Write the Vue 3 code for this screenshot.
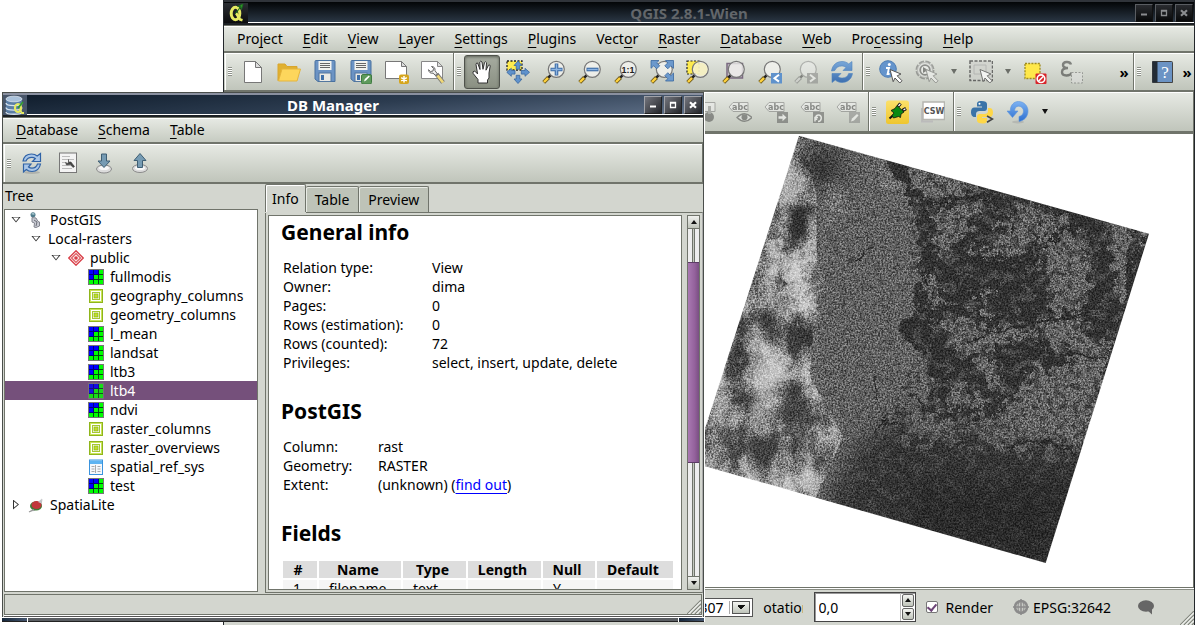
<script setup>
import { ref } from 'vue'

const mainMenu = [
  ['Pro', 'j', 'ect'], ['', 'E', 'dit'], ['', 'V', 'iew'], ['', 'L', 'ayer'], ['', 'S', 'ettings'], ['', 'P', 'lugins'],
  ['Vect', 'o', 'r'], ['', 'R', 'aster'], ['', 'D', 'atabase'], ['', 'W', 'eb'], ['Pro', 'c', 'essing'], ['', 'H', 'elp'],
]
const dbMenu = [['', 'D', 'atabase'], ['', 'S', 'chema'], ['', 'T', 'able']]

const t = (id, label, kind = '') => ({ id, label, kind })
const fileTools = [
  t('new', 'New project'), t('open', 'Open project'), t('save', 'Save project'), t('saveas', 'Save as'),
  t('composer', 'New print composer'), t('manager', 'Composer manager'),
]
const navTools = [
  t('hand', 'Pan map', 'on'), t('panto', 'Pan to selection'), t('zoomin', 'Zoom in'), t('zoomout', 'Zoom out'),
  t('zoom1', 'Zoom to native resolution'), t('zoomfull', 'Zoom full'), t('zoomsel', 'Zoom to selection'),
  t('zoomlayer', 'Zoom to layer'), t('zoomlast', 'Zoom last'), t('zoomnext', 'Zoom next', 'off'), t('refresh', 'Refresh'),
]
const attrTools = [
  t('identify', 'Identify features'), t('action', 'Run feature action', 'off'), t('', 'Action list', 'dim arrow'),
  t('select', 'Select features', 'faint'), t('', 'Selection modes', 'dim arrow'), t('deselect', 'Deselect features'),
  t('expression', 'Select by expression', 'off'),
]
const labelTools = [
  t('pin', 'Pin labels', 'off'), t('labeleye', 'Show labels', 'off'), t('labelmove', 'Move label', 'off'),
  t('labelrotate', 'Rotate label', 'off'), t('labeledit', 'Change label', 'off'),
]
const pluginTools = [t('plug', 'Plugin'), t('csw', 'Catalogue search')]
const pyTools = [t('python', 'Python console'), t('undo', 'Undo'), t('', 'More', 'arrow')]
const dbTools = [t('dbrefresh', 'Refresh'), t('sqlwin', 'SQL window'), t('import', 'Import layer'), t('export', 'Export to file')]

// Short lettering drawn on top of an icon
const abc = { text: 'abc', x: 12, y: 10, kind: 'abc' }
const glyphs = {
  zoom1: { text: '1:1', x: 14, y: 13, kind: 'ratio' },
  csw: { text: 'CSW', x: 13, y: 14, kind: 'csw' },
  labeleye: abc, labelmove: abc, labelrotate: abc, labeledit: abc,
}

const tree = [
  { d: 0, open: true, icon: 'postgis', name: 'PostGIS' },
  { d: 1, open: true, icon: '', name: 'Local-rasters' },
  { d: 2, open: true, icon: 'schema', name: 'public' },
  { d: 3, icon: 'raster', name: 'fullmodis' },
  { d: 3, icon: 'poly', name: 'geography_columns' },
  { d: 3, icon: 'poly', name: 'geometry_columns' },
  { d: 3, icon: 'raster', name: 'l_mean' },
  { d: 3, icon: 'raster', name: 'landsat' },
  { d: 3, icon: 'raster', name: 'ltb3' },
  { d: 3, icon: 'raster', name: 'ltb4' },
  { d: 3, icon: 'raster', name: 'ndvi' },
  { d: 3, icon: 'poly', name: 'raster_columns' },
  { d: 3, icon: 'poly', name: 'raster_overviews' },
  { d: 3, icon: 'table', name: 'spatial_ref_sys' },
  { d: 3, icon: 'raster', name: 'test' },
  { d: 0, open: false, icon: 'spatialite', name: 'SpatiaLite' },
]
const selected = ref('ltb4')
const tabs = ['Info', 'Table', 'Preview']
const tab = ref('Info')
const general = [
  ['Relation type:', 'View'], ['Owner:', 'dima'], ['Pages:', '0'], ['Rows (estimation):', '0'],
  ['Rows (counted):', '72'], ['Privileges:', 'select, insert, update, delete'],
]
const rotation = ref('0,0')
const render = ref(true)
</script>

<template>
  <div class="desktop">
    <svg class="sprite" aria-hidden="true">
      <defs>
        <linearGradient id="gBlue" x1="0" y1="0" x2="0" y2="1"><stop offset="0" stop-color="#79a7d8" /><stop offset="1" stop-color="#3d6fb0" /></linearGradient>
        <linearGradient id="gUndo" x1="0" y1="0" x2="0" y2="1"><stop offset="0" stop-color="#7db2f2" /><stop offset="1" stop-color="#2c6fd0" /></linearGradient>
        <linearGradient id="gYel" x1="0" y1="0" x2="0" y2="1"><stop offset="0" stop-color="#fbe06a" /><stop offset="1" stop-color="#efc62f" /></linearGradient>
      </defs>
      <symbol id="i-new" viewBox="0 0 24 24"><path d="M3.500 1.500h11l6 6v15h-17z" fill="#fff" stroke="#777" /><path d="M14.500 1.500v6h6z" fill="#ddd" stroke="#777" /></symbol>
      <symbol id="i-open" viewBox="0 0 24 24"><path d="M1 20.500V4h7l2 2.500h10V10H5z" fill="#e0b030" stroke="#d9a52c" /><path d="M5 9h18.500l-3.500 12H1.500z" fill="#fdd65c" stroke="#e5b53c" /></symbol>
      <symbol id="i-save" viewBox="0 0 24 24"><path d="M3 .5h18q1 0 1 1v20H5l-3-2.500V1.500q0-1 1-1z" fill="#6b93c4" stroke="#49719f" /><rect x="5.500" y="1" width="13" height="9" fill="#f2f2ee" /><path d="M7 3.500h10M7 5.500h10M7 7.500h10" stroke="#666" /><rect x="6" y="13" width="12" height="8.500" fill="#e9e9e4" stroke="#53779f" /><rect x="8" y="15" width="3" height="5" fill="#3f6fa8" /></symbol>
      <symbol id="i-saveas" viewBox="0 0 24 24"><use href="#i-save" /><rect x="12.500" y="14.500" width="10" height="9.500" rx="1.500" fill="#5e9a5c" stroke="#3e7a40" /><path d="M15 21.500l.8-2.500 4-3.500 1 1-3.800 4z" fill="#fff" /></symbol>
      <symbol id="i-composer" viewBox="0 0 24 24"><path d="M.5 1.500h16l5 5v12h-21z" fill="#fff" stroke="#777" /><path d="M16.500 1.500v5h5z" fill="#ddd" stroke="#777" /><rect x="14" y="14.500" width="10" height="9.500" rx="2" fill="#d5a51c" /><path d="M19 16v6.500M16.200 17.600l5.600 3.300M21.800 17.600l-5.600 3.300" stroke="#fff" stroke-width="1.500" /></symbol>
      <symbol id="i-manager" viewBox="0 0 24 24"><path d="M.5 1.500h16l5 5v12h-21z" fill="#fff" stroke="#888" /><path d="M16.500 1.500v5h5z" fill="#ddd" stroke="#888" /><path d="M10.500 6.500l2 2-.5 2.500-2.500.5-2-1.800q.5 4 4.500 3.500l3.500 3 1.500-1.500-3-4q.5-4-3.500-4.200z" fill="#eee" stroke="#666" /><path d="M15.500 14l6.500 8.500" stroke="#777" stroke-width="4.500" /><path d="M16.500 15.500l5.500 7" stroke="#f0d878" stroke-width="2.800" /></symbol>
      <symbol id="i-hand" viewBox="0 0 24 24"><path d="M8 23v-3.500L3.200 13.500q-1-2 1-2.400 1.200 0 3.400 2.900L6 4.500q.2-2 1.600-1.500L10 9.500 9.800 2q.8-1.800 2.200 0l1 7.300L14.500 2.500q1-1.500 2 .2L16 10.200l2.500-5q1.500-1 1.700.8L19 13v5l-1.500 2v3z" fill="#fff" stroke="#333" stroke-linejoin="round" /></symbol>
      <symbol id="i-panto" viewBox="0 0 24 24"><path d="M1 1h15v9H1z" fill="#fdea4e" stroke="#222" stroke-width="1.300" stroke-dasharray="2 1.500" /><path d="M12 1l4 4.500h-2.200v3.700h-3.600V5.500H8zM12 23.500l4-4.500h-2.200v-3.700h-3.600V19H8zM.8 12.300l4.500-4v2.200H9v3.600H5.300v2.200zM23.500 12.300l-4.500-4v2.200h-3.700v3.600H19v2.200z" fill="#5f92cc" stroke="#39679f" stroke-width=".8" /></symbol>
      <symbol id="i-mag" viewBox="0 0 24 24"><path d="M9 14.800l-3 3" stroke="#222" stroke-width="2.500" /><path d="M6.500 17.500L1.700 22.300" stroke="#6e5a1c" stroke-width="4" /><path d="M6 18L2 22" stroke="#ffd23c" stroke-width="2.400" /><circle cx="14.300" cy="9.300" r="8" fill="#f4f4f0" fill-opacity=".75" stroke="#777" stroke-width="1.200" /></symbol>
      <symbol id="i-zoomin" viewBox="0 0 24 24"><use href="#i-mag" /><path d="M14.500 3.500v12M8.500 9.500h12" stroke="#3c6ba5" stroke-width="3.600" /><path d="M14.500 4.300v10.400M9.300 9.500h10.400" stroke="#8cb4e2" stroke-width="1.400" /></symbol>
      <symbol id="i-zoomout" viewBox="0 0 24 24"><use href="#i-mag" /><path d="M8.500 9.500h12" stroke="#3c6ba5" stroke-width="3.600" /><path d="M9.300 9.500h10.400" stroke="#8cb4e2" stroke-width="1.400" /></symbol>
      <symbol id="i-zoom1" viewBox="0 0 24 24"><use href="#i-mag" /></symbol>
      <symbol id="i-zoomfull" viewBox="0 0 24 24"><use href="#i-mag" /><path d="M1 .5h8L6.700 2.800l3 3-3 3-3-3L1 8.300zM23.500.5h-8l2.300 2.300-3 3 3 3 3-3 2.700 2.500zM23.500 21h-8l2.300-2.300-3-3 3-3 3 3 2.700-2.700z" fill="#6c99cc" stroke="#39679f" stroke-width=".8" /></symbol>
      <symbol id="i-zoomsel" viewBox="0 0 24 24"><rect x="1" y="1" width="12" height="13" fill="#fdea4e" stroke="#222" stroke-width="1.200" stroke-dasharray="2 1.500" /><use href="#i-mag" /><circle cx="15" cy="9.300" r="6.500" fill="#f7efb4" fill-opacity=".7" /></symbol>
      <symbol id="i-zoomlayer" viewBox="0 0 24 24"><rect x="5" y="3.500" width="15.500" height="14.500" fill="#c9c1c9" stroke="#7a6a80" stroke-width="1.500" /><use href="#i-mag" /></symbol>
      <symbol id="i-zoomlast" viewBox="0 0 24 24"><use href="#i-mag" /><rect x="13" y="13" width="11" height="10.500" fill="#5f92cc" /><path d="M21 14.800l-4.500 3.400 4.500 3.400" fill="none" stroke="#fff" stroke-width="2" /></symbol>
      <symbol id="i-zoomnext" viewBox="0 0 24 24"><use href="#i-mag" /><rect x="13" y="13" width="11" height="10.500" fill="#777" /><path d="M16 14.800l4.500 3.400-4.500 3.400" fill="none" stroke="#fff" stroke-width="2" /></symbol>
      <symbol id="i-refresh" viewBox="0 0 24 24"><path d="M1.500 11C2.500 4.500 7 1.500 12 1.500c3 0 5 .9 6.700 2.400L22 1.500v9h-9l3-3c-1.200-1-2.500-1.500-4.200-1.500C8.500 6 6 7.500 4.800 10.500zM22.500 13.500c-1 6-5.500 9-10.500 9-3 0-5-1-6.700-2.400L2 22.500v-9h9l-3 3c1.200 1 2.500 1.500 4.200 1.500 3.300 0 5.500-1.500 6.500-4.500z" fill="url(#gBlue)" stroke="#4f83bd" stroke-width=".6" /></symbol>
      <symbol id="i-cursor" viewBox="0 0 24 24"><path d="M11 9.500l11 4.500-3.800 1.800 4.800 5-2.200 2.200-4.800-5-1.800 3.700z" fill="#fff" stroke="#555" /></symbol>
      <symbol id="i-identify" viewBox="0 0 24 24"><circle cx="9" cy="9" r="8.300" fill="#6494cc" stroke="#4c7cb4" /><circle cx="10.300" cy="4.500" r="1.500" fill="#fff" /><path d="M7 8h3l-1.400 6h2" fill="none" stroke="#fff" stroke-width="1.900" /><use href="#i-cursor" /></symbol>
      <symbol id="i-action" viewBox="0 0 24 24"><circle cx="10" cy="10" r="8" fill="#ddd" stroke="#555" stroke-width="3" stroke-dasharray="5 1.300" /><circle cx="10" cy="10" r="7.500" fill="#e8e8e4" stroke="#999" /><circle cx="10" cy="10" r="4.800" fill="#fff" stroke="#333" stroke-width="1.800" /><path d="M8 7l5 3-5 3z" fill="#222" /><use href="#i-cursor" /></symbol>
      <symbol id="i-select" viewBox="0 0 24 24"><path d="M1 1h22.500v19.500H1z" fill="#cfd1cc" stroke="#444" stroke-width="1.500" stroke-dasharray="3 1.500" /><path d="M5 5h12v9H5z" fill="none" stroke="#aaa" /><use href="#i-cursor" /></symbol>
      <symbol id="i-deselect" viewBox="0 0 24 24"><rect x="2" y="3.500" width="15" height="15" fill="#ffe84a" stroke="#a08c1e" stroke-width="1.300" stroke-dasharray="2 1.200" /><rect x="12.500" y="13.500" width="11" height="10.500" rx="1" fill="#d8232a" /><circle cx="18" cy="18.700" r="3.800" fill="none" stroke="#fff" stroke-width="1.600" /><path d="M15.500 21.200l5-5" stroke="#fff" stroke-width="1.600" /></symbol>
      <symbol id="i-expression" viewBox="0 0 24 24"><path d="M12 4.500C11 1 4 1.200 4 5c0 2.500 2.500 3 5 3-3.500 0-6 1-6 4 0 4.500 8 4.500 10 .5" fill="none" stroke="#111" stroke-width="2.400" /><rect x="12.500" y="12.500" width="11" height="10.500" fill="#e5e5e0" stroke="#555" stroke-dasharray="2 1.500" /></symbol>
      <symbol id="i-book" viewBox="0 0 24 24"><path d="M2.500 1.500h19q1 0 1 1v20h-20z" fill="#6b93c4" stroke="#444" /><path d="M2.500 1.500h5v21h-5z" fill="#232c36" /></symbol>
      <symbol id="i-tag" viewBox="0 0 24 24"><path d="M1 7l4-4.500h15v9H5z" fill="#f2f2ee" stroke="#666" /></symbol>
      <symbol id="i-pin" viewBox="0 0 24 24"><path d="M1 2.500h22v9H1z" fill="#f2f2ee" stroke="#666" /><circle cx="17" cy="17" r="5" fill="#333" /><path d="M16 6h3v8h-3z" fill="#777" /></symbol>
      <symbol id="i-labeleye" viewBox="0 0 24 24"><use href="#i-tag" /><path d="M9 17.500q7.500-7.500 15 0-7.500 7.500-15 0z" fill="#eee" stroke="#333" stroke-width="1.300" /><circle cx="16.500" cy="17.300" r="3" fill="#333" /></symbol>
      <symbol id="i-labelmove" viewBox="0 0 24 24"><use href="#i-tag" /><rect x="13" y="12" width="11" height="11" fill="#444" /><path d="M14.500 16.300h4v-2.500l4 3.700-4 3.700v-2.500h-4z" fill="#fff" /></symbol>
      <symbol id="i-labelrotate" viewBox="0 0 24 24"><use href="#i-tag" /><rect x="13" y="12" width="11" height="11" fill="#444" /><path d="M18 21.500c4 0 4.500-6.500.5-6.500-3.500 0-3.500 4.500-1.300 4.500M15 21.500v-4h3" fill="none" stroke="#fff" stroke-width="1.500" /></symbol>
      <symbol id="i-labeledit" viewBox="0 0 24 24"><use href="#i-tag" /><rect x="13" y="12" width="11" height="11" fill="#777" /><path d="M15 21.500l1-3 5-4.500 1.500 1.500-4.500 5z" fill="#fff" /></symbol>
      <symbol id="i-plug" viewBox="0 0 24 24"><rect x="1" y=".5" width="23" height="23.500" rx="2.500" fill="url(#gYel)" /><path d="M4.500 18.500L8.500 15" stroke="#111" stroke-width="2" /><path d="M13 6.500l2.500-3M17.500 10.500l3.500-2" stroke="#111" stroke-width="3.200" /><path d="M13.500 6l1.800-2.200M18.500 9.900l2-1.100" stroke="#fff" stroke-width="1.300" /><path d="M6 10.500l4-2 2-3 7 6.500-3 2-.5 3.500-2-1-5 1.500-1.500-2.500 2-2.500z" fill="#0a8a12" stroke="#111" stroke-width=".8" /></symbol>
      <symbol id="i-csw" viewBox="0 0 24 24"><path d="M1 8v13.500h11" fill="none" stroke="#bbb" stroke-width="2" /><rect x="2" y="2" width="21.500" height="17.500" fill="#fff" stroke="#b5b5b0" stroke-width="1.500" /></symbol>
      <symbol id="i-python" viewBox="0 0 24 24"><path d="M11.500 1c-4 0-4.500 1.500-4.500 3v2.500h5v1H4.500C2 7.500 1 9.500 1 12s1 5 3.500 5H6v-3c0-2 1.500-3 3.500-3h5c1.500 0 2.500-1.200 2.500-2.700V4c0-2-2-3-5.500-3z" fill="#3a73a8" /><circle cx="9.500" cy="3.800" r="1" fill="#fff" /><path d="M12.500 23.500c4 0 4.500-1.500 4.500-3V18h-5v-1h7.500c2.500 0 3.500-2 3.500-4.500s-1-4.500-3.500-4.500H18v3c0 2-1.500 3-3.500 3h-5C8 14 7 15.200 7 16.700v3.800c0 2 2 3 5.500 3z" fill="#fed748" /><path d="M17 16l5.500 3-5.500 3.200" fill="none" stroke="#444" stroke-width="1.600" /></symbol>
      <symbol id="i-undo" viewBox="0 0 24 24"><ellipse cx="12" cy="22" rx="6" ry="1.500" fill="#999" opacity=".4" /><path d="M1 11h3.300C4.300 5 8 1.500 12.500 1.500 18 1.500 22 6 22 11c0 5.500-3.500 9.500-9 10.500v-5c3-.7 4.500-2.700 4.500-5.500 0-2.500-2-4.800-5-4.800-2.300 0-4 1.800-4 4.800H12l-5.500 6.500z" fill="url(#gUndo)" stroke="#5b93dc" stroke-width=".6" /></symbol>
      <symbol id="i-dbrefresh" viewBox="0 0 24 24"><ellipse cx="12" cy="21.500" rx="8" ry="1.500" fill="#888" opacity=".4" /><path d="M3 10C4 5 7.500 3 11.500 3c2.500 0 4.300.7 5.700 2L20.500 2.500v8h-8l2.800-3c-1-.8-2-1.200-3.500-1.200C9 6.300 7 7.500 6 10zM20.500 13c-1 5-4.500 7.500-8.500 7.500-2.500 0-4.300-.7-5.700-2L3.500 21v-8h7.500l-2.500 3c1 .8 2 1.200 3.500 1.200 2.500 0 4.500-1.200 5.500-4.200z" fill="#a9c6e8" stroke="#2f62a6" stroke-width="1.200" /></symbol>
      <symbol id="i-sqlwin" viewBox="0 0 24 24"><rect x="3.500" y="2" width="17" height="19.500" fill="#f3f3f3" stroke="#777" /><path d="M6 5.500h8M6 8.500h12M6 11.500h5M6 14.500h12M6 17.500h10" stroke="#bbb" /><path d="M12.500 8.500v2.500h2.500l1.500 2 2 2.500-1.500 1-2.500-3-4 .5-1-2.500 1.500 1 1.500-1V9z" fill="#444" stroke="#444" stroke-width=".6" /></symbol>
      <symbol id="i-import" viewBox="0 0 24 24"><ellipse cx="12" cy="18" rx="7.500" ry="4" fill="#dcdcdc" stroke="#8a8a8a" /><ellipse cx="12" cy="17" rx="5" ry="2" fill="#f8f8f8" /><path d="M9.500 3h5v7h3.500l-6 6.500L6 10h3.500z" fill="#769bb3" stroke="#3f5f74" /></symbol>
      <symbol id="i-export" viewBox="0 0 24 24"><ellipse cx="12" cy="17.500" rx="7.500" ry="4" fill="#dcdcdc" stroke="#8a8a8a" /><ellipse cx="12" cy="17" rx="5" ry="2" fill="#f8f8f8" /><path d="M9.500 16.500h5v-7h3.500L12 2.500 6 9.500h3.500z" fill="#769bb3" stroke="#3f5f74" /></symbol>
      <symbol id="i-raster" viewBox="0 0 16 16"><path d="M0 0h16v16H0z" fill="#777" /><path d="M1 1h14v14H1z" fill="#004a10" /><path d="M1 1h5v5H1zM6 1h5v5H6zM1 6h5v5H1z" fill="#000080" /><path d="M1 1h4v4H1zM6 1h4v4H6zM1 6h4v4H1z" fill="#00f" /><path d="M11 1h4v4h-4zM6 6h4v4H6zM11 6h4v4h-4zM1 11h4v4H1zM6 11h4v4H6zM11 11h4v4h-4z" fill="#0f0" /></symbol>
      <symbol id="i-poly" viewBox="0 0 16 16"><rect x="1.500" y="1.500" width="13" height="13" fill="#c9e457" stroke="#8fb51b" /><rect x="3.500" y="3.500" width="9" height="9" fill="none" stroke="#fff" /><rect x="4.500" y="4.500" width="7" height="7" fill="#fff" stroke="#a6c832" /><rect x="6" y="6" width="4" height="4" fill="#bfe02c" stroke="#8fb51b" stroke-width=".8" /></symbol>
      <symbol id="i-table" viewBox="0 0 16 16"><rect x="1.500" y="1" width="13" height="14.500" fill="#f4f8fc" stroke="#3a93dd" /><path d="M2 1.500h12v3.500H2z" fill="#5db4f2" /><path d="M3.500 7.500h3M3.500 10h3M3.500 12.500h3M9.500 7.500h3M9.500 10h3M9.500 12.500h3M7.500 6v8" stroke="#aaa" /></symbol>
      <symbol id="i-schema" viewBox="0 0 16 16"><path d="M8 .8L15.200 8 8 15.200.8 8z" fill="#fff" stroke="#d9414a" stroke-width="1.400" /><path d="M8 3.500L12.500 8 8 12.500 3.500 8z" fill="#fbe9e9" stroke="#dd5a5f" stroke-width="1.200" /><circle cx="8" cy="8" r="1.800" fill="#d9414a" /></symbol>
      <symbol id="i-postgis" viewBox="0 0 16 16"><circle cx="5" cy="2.700" r="2.500" fill="#4e7a8a" /><path d="M3 2q2-2 4 0-1 1.500-4 0z" fill="#a8c8d0" /><path d="M4 5.500l4 .5 2 3.500 1.500.5V14l-3.500 1.500-2-.5.500-4-2.500-1z" fill="#c9cbd3" stroke="#83858f" /><path d="M6 8l3 2-1 4" fill="none" stroke="#6b6d77" /></symbol>
      <symbol id="i-spatialite" viewBox="0 0 16 16"><path d="M1 14.500l6-3L14.500 2l-1 6-7 6z" fill="#b5b8bb" /><ellipse cx="8" cy="9" rx="6" ry="4.500" fill="#3f7a35" /><ellipse cx="8.500" cy="8" rx="5" ry="4" fill="#c1363b" /><path d="M10 5l4-3.500-.5 5z" fill="#c4c6c8" /><path d="M1 15l5-2.500" stroke="#999" stroke-width="1.300" /></symbol>
      <symbol id="i-qgis" viewBox="0 0 20 20"><ellipse cx="9.500" cy="10.500" rx="4.300" ry="6.200" fill="none" stroke="#e6ea62" stroke-width="3" /><path d="M10 10l4 6.500 2.500.8" fill="none" stroke="#e6ea62" stroke-width="2.600" /><path d="M9 11l6-8-3.500.500L17 1l-1.500 5.500-.5-2.500z" fill="#2f9a2c" stroke="#1d6e1e" stroke-width=".8" /></symbol>
      <symbol id="i-db" viewBox="0 0 20 20"><path d="M1 4v12c0 4 16 4 16 0V4z" fill="#5c7fa6" /><path d="M1 8c0 3.500 16 3.500 16 0M1 12.500c0 3.500 16 3.500 16 0M1 17c0 3 16 3 16 0" fill="none" stroke="#d7e2ee" stroke-width="1.300" /><ellipse cx="9" cy="4" rx="8" ry="2.800" fill="#a9c1da" stroke="#dde6f0" stroke-width=".8" /><ellipse cx="13" cy="13" rx="3" ry="4" fill="none" stroke="#e6ea62" stroke-width="2.200" /><path d="M14 14l3 4h2" fill="none" stroke="#e6ea62" stroke-width="1.800" /><path d="M13 13l5-6" stroke="#2f9a2c" stroke-width="1.800" /></symbol>
      <symbol id="i-min" viewBox="0 0 10 10"><path d="M2 6.500h6" stroke="currentColor" stroke-width="2" /></symbol>
      <symbol id="i-max" viewBox="0 0 10 10"><path d="M2.500 2.500h5v5h-5zM2 3h6" fill="none" stroke="currentColor" stroke-width="1.300" /></symbol>
      <symbol id="i-close" viewBox="0 0 10 10"><path d="M2 2.300l6 5.400M8 2.300L2 7.700" stroke="currentColor" stroke-width="2.200" /></symbol>
      <symbol id="i-globe" viewBox="0 0 16 16"><circle cx="8" cy="8" r="6" fill="#c9cbc6" stroke="#8b8b8b" stroke-width="2.500" /><ellipse cx="8" cy="8" rx="3" ry="6" fill="none" stroke="#8b8b8b" /><path d="M0 8h16M8 0v16" stroke="#8b8b8b" stroke-width="1.500" /></symbol>
      <symbol id="i-bubble" viewBox="0 0 16 16"><ellipse cx="8" cy="7" rx="8" ry="5.800" fill="#666" /><path d="M9 11l5 4.500V9z" fill="#666" /></symbol>
      <symbol id="i-grip" viewBox="0 0 14 14"><path d="M0 14L14 0M4 14L14 4M8 14l6-6M12 14l2-2" stroke="#84887f" stroke-width="1.200" /><path d="M1.500 14L14 1.500M5.500 14L14 5.500M9.500 14L14 9.500" stroke="#fff" /></symbol>
    </svg>

    <main class="window main">
      <header class="title">
        <span class="appicon"><svg><use href="#i-qgis" /></svg></span>
        <h1>QGIS 2.8.1-Wien</h1>
        <div class="ctl">
          <button v-for="b in ['min', 'max', 'close']" :key="b" :aria-label="b"><svg><use :href="'#i-' + b" /></svg></button>
        </div>
      </header>
      <nav class="menu" aria-label="Main menu">
        <button v-for="m in mainMenu" :key="m.join('')">{{ m[0] }}<u>{{ m[1] }}</u>{{ m[2] }}</button>
      </nav>
      <div class="bars">
        <div class="group"><i class="handle" /><button v-for="b in fileTools" :key="b.label" class="tool" :aria-label="b.label"><svg><use :href="'#i-' + b.id" /></svg></button></div>
        <div class="group"><i class="handle" /><button v-for="b in navTools" :key="b.label" class="tool" :class="b.kind" :aria-label="b.label"><svg><use :href="'#i-' + b.id" /><text v-if="glyphs[b.id]" :x="glyphs[b.id].x" :y="glyphs[b.id].y" :class="glyphs[b.id].kind">{{ glyphs[b.id].text }}</text></svg></button></div>
        <div class="group grow"><i class="handle" /><button v-for="b in attrTools" :key="b.label" class="tool" :class="b.kind" :aria-label="b.label"><svg v-if="b.id"><use :href="'#i-' + b.id" /></svg></button><button class="more">»</button></div>
        <div class="group last"><i class="handle" /><button class="tool" aria-label="Help contents"><svg><use href="#i-book" /><text x="15" y="18" class="query">?</text></svg></button><button class="more">»</button></div>
      </div>
      <div class="bars">
        <div class="group labels"><button v-for="b in labelTools" :key="b.label" class="tool" :class="b.kind" :aria-label="b.label"><svg><use :href="'#i-' + b.id" /><text v-if="glyphs[b.id]" :x="glyphs[b.id].x" :y="glyphs[b.id].y" :class="glyphs[b.id].kind">{{ glyphs[b.id].text }}</text></svg></button></div>
        <div class="group"><i class="handle" /><button v-for="b in pluginTools" :key="b.label" class="tool" :aria-label="b.label"><svg><use :href="'#i-' + b.id" /><text v-if="glyphs[b.id]" :x="glyphs[b.id].x" :y="glyphs[b.id].y" :class="glyphs[b.id].kind">{{ glyphs[b.id].text }}</text></svg></button></div>
        <div class="group grow"><i class="handle" /><button v-for="b in pyTools" :key="b.label" class="tool" :class="b.kind" :aria-label="b.label"><svg v-if="b.id"><use :href="'#i-' + b.id" /></svg></button></div>
      </div>

      <section class="map" aria-label="Map canvas">
        <svg viewBox="15 12 1464 1362" width="488" height="454" preserveAspectRatio="xMaxYMin meet">
          <defs>
            <clipPath id="scene"><path d="M297 17L1347 311 1037 1299-18 999z" /></clipPath>
            <filter id="rough" x="-10%" y="-10%" width="120%" height="120%" color-interpolation-filters="sRGB">
              <feTurbulence type="fractalNoise" baseFrequency=".035" numOctaves="5" seed="4" />
              <feDisplacementMap in="SourceGraphic" scale="100" xChannelSelector="R" yChannelSelector="G" />
            </filter>
            <filter id="edge" x="-10%" y="-10%" width="120%" height="120%" color-interpolation-filters="sRGB">
              <feTurbulence type="fractalNoise" baseFrequency=".025" numOctaves="4" seed="9" />
              <feDisplacementMap in="SourceGraphic" scale="50" xChannelSelector="R" yChannelSelector="G" />
            </filter>
            <filter id="soft" x="-30%" y="-30%" width="160%" height="160%" color-interpolation-filters="sRGB">
              <feGaussianBlur stdDeviation="12" result="b" />
              <feTurbulence type="fractalNoise" baseFrequency=".04" numOctaves="5" seed="7" />
              <feDisplacementMap in="b" scale="90" xChannelSelector="R" yChannelSelector="G" />
            </filter>
            <filter id="wide" x="-30%" y="-30%" width="160%" height="160%"><feGaussianBlur stdDeviation="35" /></filter>
            <filter id="patch" x="0" y="0" width="100%" height="100%" color-interpolation-filters="sRGB">
              <feTurbulence type="fractalNoise" baseFrequency=".03 .035" numOctaves="6" seed="21" />
              <feColorMatrix values="0 0 0 0 .42  0 0 0 0 .42  0 0 0 0 .42  14 0 0 0 -7.200" />
              <feComposite in2="SourceGraphic" operator="in" />
            </filter>
            <filter id="pits" x="0" y="0" width="100%" height="100%" color-interpolation-filters="sRGB">
              <feTurbulence type="fractalNoise" baseFrequency=".05" numOctaves="5" seed="33" />
              <feColorMatrix values="0 0 0 0 .2  0 0 0 0 .2  0 0 0 0 .2  12 0 0 0 -6.300" />
              <feComposite in2="SourceGraphic" operator="in" />
            </filter>
            <filter id="cloud" x="0" y="0" width="100%" height="100%" color-interpolation-filters="sRGB">
              <feTurbulence type="fractalNoise" baseFrequency=".013 .009" numOctaves="7" seed="3" />
              <feColorMatrix values="2.400 0 0 0 -.720  2.400 0 0 0 -.720  2.400 0 0 0 -.720  0 0 0 0 1" />
              <feComposite in2="SourceGraphic" operator="in" />
            </filter>
            <filter id="grain" x="0" y="0" width="100%" height="100%" color-interpolation-filters="sRGB">
              <feTurbulence type="fractalNoise" baseFrequency=".2" numOctaves="3" seed="12" />
              <feColorMatrix values="2 0 0 0 -.55  2 0 0 0 -.55  2 0 0 0 -.55  0 0 0 0 1" />
            </filter>
          </defs>
          <g clip-path="url(#scene)">
            <path d="M-20 0h1400v1320H-20z" fill="#696969" />
            <g filter="url(#wide)">
              <path d="M240 280L320 420 300 740 380 930 330 1100-40 1050 150 450z" fill="#8c8c8c" />
              <path d="M330 60l90 20 10 80-110 10z" fill="#3a3a3a" />
            </g>
            <g filter="url(#cloud)" opacity=".5"><path d="M300 0L350 200 350 430 330 740 430 920 340 1120-40 1060 160 420z" fill="#000" /></g>
            <g filter="url(#soft)" opacity=".7">
              <path d="M400 160L430 190 430 260 380 260z" fill="#999" />
              <path d="M520 90L570 130 600 210 570 180z" fill="#a0a0a0" />
              <path d="M260 140L300 180 300 220 270 210z" fill="#aaa" />
              <path d="M220 310L250 350 325 420 345 500 345 570 320 580 290 510 245 480 250 410 200 390 200 360z" fill="#e2e2e2" />
              <path d="M160 470l40 20 10 40-50-10z" fill="#aaa" />
              <path d="M210 640L250 650 270 730 245 780 210 770z" fill="#d8d8d8" />
              <path d="M150 650L200 650 190 790 150 720z" fill="#b0b0b0" />
              <path d="M60 780l50 10-20 60-50-10zM150 830l30 10 40 40-50-10zM30 925l30 10 0 30-30-10zM360 890l50 30-20 40-50-20z" fill="#b5b5b5" />
              <path d="M140 530l90 20-20 15-80-10zM90 660l40 10 0 80-50 0zM225 250l20 10-20 80-20-10z" fill="#2c2c2c" />
              <path d="M270 810l60 20 0 80-70 10-20-60z" fill="#444" />
              <path d="M330 90l40-40 20 20 10 80-60 0z" fill="#3a3a3a" />
            </g>
            <path filter="url(#wide)" fill="#333" opacity=".9" d="M640 860L1300 980 1100 1400 360 1180 420 1020 500 920z" />
            <path filter="url(#edge)" fill="#343434" d="M500 60L620 90 1400 290 1250 800 1150 850 800 880 660 850 700 760 680 690 640 650 590 600 640 560 650 460 670 380 650 290 620 170 560 90z" />
            <g filter="url(#rough)" fill="#6e6e6e">
              <path d="M620 95L860 160 830 185 690 215 640 180z" />
              <path d="M700 250L850 200 860 240 760 340 750 390 710 370z" />
              <path d="M790 375L810 340 880 370 880 290 910 250 925 360 950 230 1010 220 1000 330 960 380z" />
              <path d="M1020 230L1110 260 1080 300 1160 320 1180 400 1150 520 1060 560 1040 420 1020 340z" />
              <path d="M1210 275L1350 310 1250 370zM1240 350l30 10 10 160-30-20z" />
              <path d="M670 430l50 50 20 60-50-30zM840 480l40 0-10 70-30 0z" />
              <path d="M700 570L820 550 830 600 1000 590 990 620 850 660 900 730 910 810 870 760 820 690 770 670 740 620z" />
              <path d="M770 750l70 50 0 40-110-20z" />
              <path d="M1020 560L1160 560 1140 620 1240 640 1150 940 960 910 900 850 1000 720 1130 680 1010 640z" />
              <path d="M640 840l150 40-80 50-80-10zM800 860l160 0 190 70-280 20z" opacity=".75" />
            </g>
            <path filter="url(#patch)" opacity=".5" d="M640 120L1330 310 1200 900 1100 1000 600 950 640 700z" />
            <path filter="url(#pits)" opacity=".6" d="M620 100L1330 310 1160 1000 520 920 640 700z" />
            <path filter="url(#pits)" opacity=".25" d="M300 0h320v1000H300z" />
            <path filter="url(#patch)" opacity=".25" d="M400 900h750v400H300z" />
            <g fill="none" stroke="#2d2d2d" filter="url(#edge)">
              <path d="M650 230Q760 210 860 190M780 370Q800 410 1010 395L1040 340 1150 270M800 640Q1000 560 1180 560M870 700Q1000 640 1210 690M930 950Q1000 910 1150 980" stroke-width="7" />
              <path d="M530 900q10-30 90-20M620 790q40 0 50 60M530 730v70M520 350l-60 50" stroke-width="5" />
            </g>
            <path filter="url(#wide)" d="M600 1060L1150 1050 1060 1330 640 1230z" fill="#1c1c1c" opacity=".4" />
            <path filter="url(#grain)" class="grain" d="M-20 0h1400v1320H-20z" />
          </g>
        </svg>
      </section>

      <footer class="status">
        <select class="scale" aria-label="Scale"><option>307</option></select>
        <label class="rot" for="rotation"><span>Rotation</span></label>
        <span class="spin">
          <input id="rotation" v-model="rotation" type="text">
          <span><button aria-label="Increase"><i class="up" /></button><button aria-label="Decrease"><i class="down" /></button></span>
        </span>
        <label class="check"><input v-model="render" type="checkbox">Render</label>
        <button class="crs"><svg><use href="#i-globe" /></svg>EPSG:32642</button>
        <button class="msg" aria-label="Messages"><svg><use href="#i-bubble" /></svg></button>
        <svg class="grip"><use href="#i-grip" /></svg>
      </footer>
    </main>

    <section class="window dialog" aria-label="DB Manager">
      <header class="title">
        <span class="appicon"><svg><use href="#i-db" /></svg></span>
        <h2>DB Manager</h2>
        <div class="ctl">
          <button v-for="b in ['min', 'max', 'close']" :key="b" :aria-label="b"><svg><use :href="'#i-' + b" /></svg></button>
        </div>
      </header>
      <nav class="menu" aria-label="DB Manager menu">
        <button v-for="m in dbMenu" :key="m.join('')">{{ m[0] }}<u>{{ m[1] }}</u>{{ m[2] }}</button>
      </nav>
      <div class="bars">
        <div class="group grow"><i class="handle" /><button v-for="b in dbTools" :key="b.label" class="tool" :aria-label="b.label"><svg><use :href="'#i-' + b.id" /></svg></button></div>
      </div>
      <div class="split">
        <div class="side">
          <h3>Tree</h3>
          <ul class="tree">
            <li v-for="n in tree" :key="n.name" :class="['d' + n.d, { sel: n.name === selected, leaf: n.open === undefined }]" @click="selected = n.name">
              <i v-if="n.open !== undefined" class="twist" :class="{ closed: !n.open }" />
              <svg v-if="n.icon"><use :href="'#i-' + n.icon" /></svg>
              <span>{{ n.name }}</span>
            </li>
          </ul>
        </div>
        <div class="pane">
          <div class="tabs" role="tablist">
            <button v-for="x in tabs" :key="x" role="tab" :aria-selected="x === tab" :class="{ active: x === tab }" @click="tab = x">{{ x }}</button>
          </div>
          <div class="panel">
            <article class="doc">
              <h4>General info</h4>
              <table class="props wide">
                <tbody><tr v-for="r in general" :key="r[0]"><th scope="row">{{ r[0] }}</th><td>{{ r[1] }}</td></tr></tbody>
              </table>
              <h4>PostGIS</h4>
              <table class="props">
                <tbody>
                  <tr><th scope="row">Column:</th><td>rast</td></tr>
                  <tr><th scope="row">Geometry:</th><td>RASTER</td></tr>
                  <tr><th scope="row">Extent:</th><td>(unknown) (<a href="#extent">find out</a>)</td></tr>
                </tbody>
              </table>
              <h4>Fields</h4>
              <table class="fields">
                <colgroup><col class="c1"><col class="c2"><col class="c3"><col class="c4"><col class="c5"><col class="c6"></colgroup>
                <thead><tr><th>#</th><th>Name</th><th>Type</th><th>Length</th><th>Null</th><th>Default</th></tr></thead>
                <tbody><tr><td>1</td><td>filename</td><td>text</td><td /><td>Y</td><td /></tr></tbody>
              </table>
            </article>
            <div class="scroll">
              <button aria-label="Scroll up"><i class="up" /></button>
              <div class="track"><span class="before" /><span class="thumb" /><span class="after" /></div>
              <button aria-label="Scroll down"><i class="down" /></button>
            </div>
          </div>
        </div>
      </div>
      <footer class="dbstatus"><svg class="grip"><use href="#i-grip" /></svg></footer>
      <div class="frame"><i /><i /><i /></div>
    </section>
  </div>
</template>

<style>
html, body, #app { height: 100%; }
body { margin: 0; overflow: hidden; background: #fff; }
</style>

<style scoped>
.desktop { position: relative; height: 100%; overflow: hidden; font: 14px/19px "Noto Sans", "Open Sans", sans-serif; color: #000; }
.desktop * { box-sizing: border-box; }
.sprite { position: absolute; width: 0; height: 0; }
button { margin: 0; padding: 0; border: 0; background: none; font: inherit; color: inherit; }
h1, h2, h3, h4 { margin: 0; }

.window { position: absolute; display: flex; flex-direction: column; background: #d3d6cf; }
.main { inset: 0 0 0 223px; border: solid #23272b; border-width: 0 1px; }
.dialog { left: 2px; top: 92px; width: 702px; height: 530px; border: solid #4a4e4b; border-width: 1px 1px 0; box-shadow: 1px 0 #fff; }

.title { display: flex; align-items: center; flex: none; height: 24px; border-top: 2px solid #30343a; border-bottom: 2px solid #1c2024; background: linear-gradient(#030507, #2c3947); box-shadow: inset 0 -1px #fff; }
.main .title { height: 25px; }
.title h1, .title h2 { flex: 1; font-size: 15px; line-height: 18px; font-weight: 700; text-align: center; }
.title h1 { padding-right: 4px; color: #62666a; }
.title h2 { padding-right: 4px; color: #fff; }
.dialog .title { background: linear-gradient(175deg, #0f1c2b, #2c3c50 50%, #61728a); border-top-color: #8a90a0; }
.appicon { display: flex; align-items: center; justify-content: center; width: 24px; height: 20px; background: linear-gradient(#2b2e33, #0c0d0f); }
.dialog .appicon { background: #48566a; }
.appicon svg { width: 20px; height: 20px; }
.ctl { display: flex; gap: 2px; padding: 0 1px; }
.ctl button { display: flex; align-items: center; justify-content: center; width: 18px; height: 18px; border: 1px solid; border-color: #5a5d62 #111 #111 #5a5d62; background: linear-gradient(#2a2c30, #08090a); color: #8b8d90; }
.dialog .ctl button { border-color: #a0a2a8 #222 #222 #a0a2a8; background: linear-gradient(135deg, #74767e, #23252a); color: #fff; }
.ctl svg { width: 10px; height: 10px; }

.menu { display: flex; align-items: center; flex: none; gap: 20px; height: 28px; padding: 0 13px; border: solid #70746b; border-width: 1px 0 2px; background: linear-gradient(#e7eae4, #c6cbc1); box-shadow: inset 0 1px #fff; }
.menu button { line-height: 22px; }
u { text-decoration-thickness: 1px; text-underline-offset: 3px; text-decoration-skip-ink: none; }

.bars { display: flex; flex: none; height: 39px; padding-left: 1px; border-bottom: 2px solid #70746b; background: linear-gradient(#e7eae4, #c0c5bb); }
.bars + .bars { height: 41px; }
.group { display: flex; align-items: center; flex: none; padding-right: 2px; border-right: 1px solid #70746b; box-shadow: inset 1px 1px #fff; }
.grow { flex: 1 1 0; min-width: 0; }
.last { padding-right: 0; border-right: 0; }
.labels { width: 644px; justify-content: flex-end; }
.handle { flex: none; width: 10px; height: 9px; background: repeating-linear-gradient(#8c9088 0 1px, #fff 1px 2px, transparent 2px 2px) 3px 0 / 4px 9px no-repeat; }
.tool { display: flex; align-items: center; justify-content: center; flex: none; width: 36px; height: 36px; }
.tool svg { width: 24px; height: 24px; }
.tool text { text-anchor: middle; font-family: "DejaVu Sans", sans-serif; font-weight: 700; }
.tool .abc { font-size: 8px; fill: #222; }
.tool .ratio { font-family: "Liberation Sans", sans-serif; font-size: 9px; fill: #222; }
.tool .csw { font-size: 8px; fill: #555; }
.tool .query { font-family: "Liberation Serif", serif; font-size: 17px; font-weight: 400; fill: #fff; }
.on { width: 36px; height: 34px; border: 1px solid #4f524c; border-radius: 3px; background: linear-gradient(#a6aba0, #8a9082); box-shadow: inset 0 1px 3px #5c6157; }
.off svg { opacity: .45; filter: grayscale(1); }
.faint svg { opacity: .75; }
.arrow { width: 18px; }
.arrow::before { content: ""; border: solid transparent; border-width: 5px 3px 0; border-top-color: #111; }
.dim::before { border-top-color: #6b6e68; }
.more { width: 14px; font-weight: 700; font-size: 15px; line-height: 20px; }
.grow .more { margin-left: auto; }

.map { display: flex; justify-content: flex-end; flex: 1 1 0; min-height: 0; border: solid #70746b; border-width: 1px 1px 1px 0; background: #fff; }
.map svg { flex: none; }
.grain { mix-blend-mode: overlay; opacity: .5; }

.status { display: flex; align-items: center; justify-content: flex-end; flex: none; height: 37px; border-top: 1px solid #fff; box-shadow: inset 0 1px #8b8f86; }
.scale {
  width: 74px; height: 19px; padding: 0 0 0 20px; border: 1px solid #555; border-radius: 0; appearance: none; font: inherit; line-height: 17px; color: #000;
  background:
    conic-gradient(from -45deg at 50% 100%, #111 90deg, transparent 0) right 7px center / 8px 4px no-repeat,
    linear-gradient(#f4f5f2, #bfc4ba) right 3px center / 16px 11px no-repeat,
    linear-gradient(#555, #555) right 2px center / 18px 13px no-repeat,
    linear-gradient(#aaa, #aaa) right 22px center / 1px 13px no-repeat,
    #fff;
}
.rot { display: flex; justify-content: center; width: 40px; margin: 0 11px 0 10px; overflow: hidden; }
.spin { display: flex; width: 102px; height: 30px; border: 1px solid #444; background: #fff; box-shadow: inset 1px 1px #999; }
.spin input { flex: 1; min-width: 0; padding: 0 4px; border: 0; background: none; font: inherit; }
.spin > span { display: flex; flex-direction: column; gap: 1px; width: 15px; padding: 1px; border-left: 1px solid #bbb; }
.spin button { display: flex; flex: 1; align-items: center; justify-content: center; border: 1px solid #666; border-radius: 2px; background: linear-gradient(#f4f5f2, #bfc4ba); }
.up, .down { border: solid transparent; border-width: 0 3px 4px; border-bottom-color: #111; }
.down { border-width: 4px 3px 0; border-top-color: #111; }
.check { display: flex; align-items: center; gap: 8px; margin-left: 10px; }
.check input { display: flex; align-items: center; justify-content: center; width: 12px; height: 12px; margin: 0; border: 1px solid #777; border-radius: 2px; appearance: none; background: #fff; }
.check input:checked::before { content: ""; width: 4px; height: 7px; margin-bottom: 2px; border: solid #6d4577; border-width: 0 2px 2px 0; transform: rotate(40deg); }
.crs { display: flex; align-items: center; gap: 4px; margin-left: 20px; }
.crs svg, .msg svg { width: 16px; height: 16px; }
.msg { display: flex; margin: 0 26px 0 27px; }
.grip { flex: none; align-self: flex-end; width: 14px; height: 14px; }

.dialog .menu { height: 27px; }
.dialog .bars { height: 40px; }
.split { display: flex; flex: 1; min-height: 0; }
.side { display: flex; flex: 0 0 255px; flex-direction: column; }
.side h3 { padding: 2px 2px 4px; font-size: 14px; line-height: 19px; font-weight: 400; }
.tree { flex: 1; margin: 0 0 1px 1px; padding: 0; border: 1px solid #70746b; list-style: none; background: #fff; overflow: hidden; }
.tree li { display: flex; align-items: center; height: 19px; padding-left: 6px; }
.tree .d1 { padding-left: 26px; }
.tree .d2 { padding-left: 46px; }
.tree .leaf { padding-left: 83px; }
.tree svg { flex: none; width: 16px; height: 16px; margin-right: 6px; }
.tree .sel { background: #75507b; color: #fff; }
.sel svg { opacity: .8; }
.twist { flex: none; width: 10px; height: 6px; margin-right: 7px; background: #333; clip-path: polygon(0 0, 100% 0, 50% 100%, 0 0, 20% 17%, 50% 78%, 80% 17%, 20% 17%); }
.closed { width: 6px; height: 10px; margin: 0 9px 0 2px; clip-path: polygon(0 0, 100% 50%, 0 100%, 0 0, 17% 20%, 17% 80%, 78% 50%, 17% 20%); }

.pane { display: flex; flex: 1; flex-direction: column; min-width: 0; padding-left: 7px; }
.tabs { display: flex; align-items: flex-end; flex: none; height: 28px; }
.tabs button { height: 26px; padding: 0 9px; border: 1px solid #70746b; border-bottom: 0; border-left-width: 0; border-radius: 2px 2px 0 0; background: #bec3b8; box-shadow: inset 1px 1px #e8ebe5; }
.tabs .active { position: relative; height: 28px; padding: 0 6px; border-left-width: 1px; background: #d3d6cf; box-shadow: inset 1px 1px #fff, 0 1px #d3d6cf; }
.panel { display: flex; flex: 1; gap: 5px; min-height: 0; padding: 2px; border: 1px solid #70746b; border-right-color: #aaa; }
.doc { flex: 1; min-width: 0; padding: 2px 6px 0 12px; border: 1px solid #70746b; background: #fff; overflow: hidden; }
.doc h4 { margin: 0 0 12px; font-size: 21px; line-height: 28px; font-weight: 700; }
.props { margin: 0 0 25px; border-spacing: 2px 0; }
.props th, .props td { padding: 0; line-height: 19px; text-align: left; font-weight: 400; }
.props th { width: 93px; }
.wide th { width: 147px; }
.doc a { color: #00f; text-underline-offset: 3px; text-decoration-skip-ink: none; }
.fields { width: 100%; table-layout: fixed; border-spacing: 2px; }
.fields th { padding: 0 4px 0 0; line-height: 17px; background: #ddd; }
.fields td { padding: 0 10px; line-height: 17px; background: #f5f5f5; }
.c1 { width: 34px; } .c2 { width: 82px; } .c3 { width: 63px; } .c4 { width: 73px; } .c5 { width: 52px; }
.scroll { display: flex; flex: 0 0 13px; flex-direction: column; border: 1px solid #70746b; background: #eee; }
.scroll button { display: flex; align-items: center; justify-content: center; height: 12px; background: linear-gradient(#f0f1ee, #bfc4ba); }
.track { display: flex; flex: 1; flex-direction: column; align-items: center; border: solid #70746b; border-width: 1px 0; }
.before, .after { flex: 33; width: 3px; border: solid #70746b; border-width: 0 1px; background: #c4c8bf; }
.after { flex: 115; }
.thumb { flex: 202; align-self: stretch; border: solid #5d3c66; border-width: 1px 0; background: linear-gradient(90deg, #a979b2, #94629c 60%, #7a4f83); }

.dbstatus { display: flex; justify-content: flex-end; flex: none; height: 21px; margin: 1px 1px 2px; border: 1px solid #70746b; box-shadow: 0 1px #fff, 0 2px #555; }
.frame { display: flex; flex: none; gap: 1px; height: 5px; margin: 0 -1px; border-top: 1px solid #fff; background: #fff; }
.frame i { width: 25px; border-bottom: 1px solid #222; background: linear-gradient(90deg, #16273a, #45566e); }
.frame i:nth-child(2) { flex: 1; background: #5a5e62; }
</style>
